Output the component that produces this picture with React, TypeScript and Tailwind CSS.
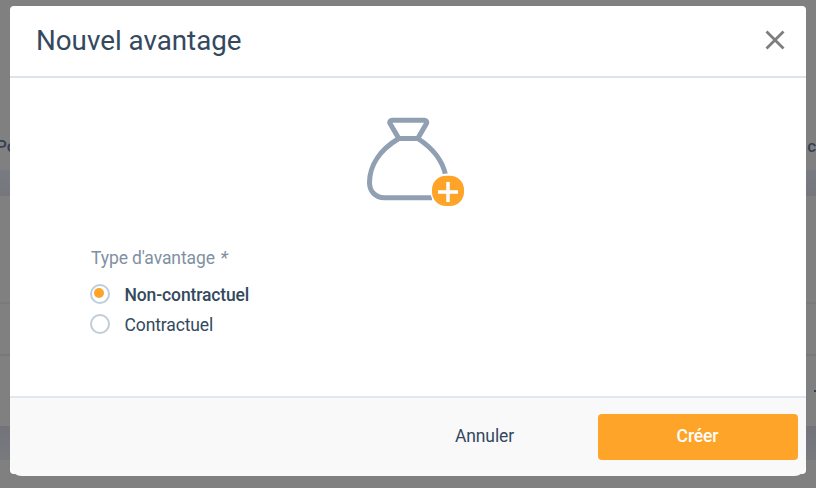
import { useState } from 'react';
import clsx from 'clsx';

const options = [
  { value: 'non-contractuel', label: 'Non-contractuel' },
  { value: 'contractuel', label: 'Contractuel' },
];

function MoneyBagIcon() {
  return (
    <svg width="100" height="92" viewBox="0 0 100 92" fill="none" aria-hidden="true">
      <g stroke="#90a0b2" strokeWidth="5" strokeLinejoin="round">
        <path d="M26 5.200H58.500C60.500 5.200 61.300 7 60.300 8.800L51.800 23.500H32.800L24.200 8.800C23.200 7 24 5.200 26 5.200Z" />
        <path d="M32.800 23.500C14.500 34.500 3.500 50 3.500 67.500C3.500 76 9 82.700 18.500 82.700H66M51.800 23.500C66.500 33 76.500 45 79.700 60.500" />
      </g>
      <rect x="64.500" y="58.500" width="36" height="35" rx="17" fill="#fff" />
      <rect x="66" y="60.700" width="32" height="30.300" rx="14" fill="#fda429" />
      <path d="M82 67V87M72 77H92" stroke="#fff" strokeWidth="3.500" />
    </svg>
  );
}

function PageBehind() {
  return (
    <div className="h-full bg-[#808080] text-[#344152]" aria-hidden="true">
      <div className="flex h-[170px] items-end justify-between pb-[14px] text-[17px] leading-5 font-medium">
        <span className="-ml-1">Po</span>
        <span>c</span>
      </div>
      <div className="h-[26px] bg-gradient-to-b from-[#797b82] to-[#75777d]" />
      <div className="h-[108px] border-b-2 border-[#797a7b]" />
      <div className="h-[52px] border-b-2 border-[#77787a]" />
      <div className="flex h-[70px] items-center justify-end">
        <span className="size-[2px] bg-[#344152]" />
      </div>
      <div className="h-[34px] bg-gradient-to-b from-[#727479] to-[#787a80]" />
    </div>
  );
}

export default function App() {
  const [type, setType] = useState('non-contractuel');

  return (
    <div className="relative h-[488px] w-[816px] overflow-hidden font-['Roboto',sans-serif]">
      <PageBehind />

      <div role="dialog" className="absolute top-[6px] left-[10px] flex h-[468px] w-[796px] flex-col rounded-[4px] bg-white">
        <header className="flex h-[72px] shrink-0 items-center justify-between border-b-2 border-[#dde3e8] pr-[21px] pl-[26px]">
          <h1 className="text-[27.750px] leading-8 text-[#34495e]">Nouvel avantage</h1>
          <button type="button" aria-label="Fermer" className="-mt-[2px]">
            <svg width="20" height="20" viewBox="0 0 20 20" stroke="#7d7d7d" strokeWidth="2.800">
              <path d="M1.500 1.500L18.500 18.500M18.500 1.500L1.500 18.500" />
            </svg>
          </button>
        </header>

        <main className="h-[318px] shrink-0 px-20 pt-[37px]">
          <div className="flex justify-center pl-4">
            <MoneyBagIcon />
          </div>
          <p className="mt-[41px] pl-px text-[17.500px] leading-5 tracking-[-0.1px] text-[#8090a2]">
            Type d'avantage <em className="ml-px text-[19px] leading-5">*</em>
          </p>
          <div className="mt-[11px] flex flex-col">
            {options.map((option) => (
              <button
                key={option.value}
                type="button"
                role="radio"
                aria-checked={type === option.value}
                onClick={() => setType(option.value)}
                className="flex h-[30px] items-center gap-[14.500px] text-left"
              >
                <span className="flex size-5 items-center justify-center rounded-full border-2 border-[#bfcddb]">
                  {type === option.value && <span className="mr-[2px] mb-[2px] size-[10px] rounded-full bg-[#fda429]" />}
                </span>
                <span
                  className={clsx(
                    'pt-[2px] text-[17.500px] leading-5 tracking-[-0.12px] text-[#34495e]',
                    type === option.value && 'font-medium'
                  )}
                >
                  {option.label}
                </span>
              </button>
            ))}
          </div>
        </main>

        <footer className="flex h-20 shrink-0 items-center justify-end rounded-b-[12px] border-t-2 border-[#dfe9f2] bg-[#f9f9f9] pr-2 text-[17.500px] tracking-[-0.12px]">
          <button type="button" className="mr-[84px] pb-[2px] text-[#34495e]">Annuler</button>
          <button type="button" className="h-[46px] w-[200px] rounded-[4px] bg-[#fda429] pr-px pb-[2px] font-medium text-white">
            Créer
          </button>
        </footer>
      </div>
    </div>
  );
}
